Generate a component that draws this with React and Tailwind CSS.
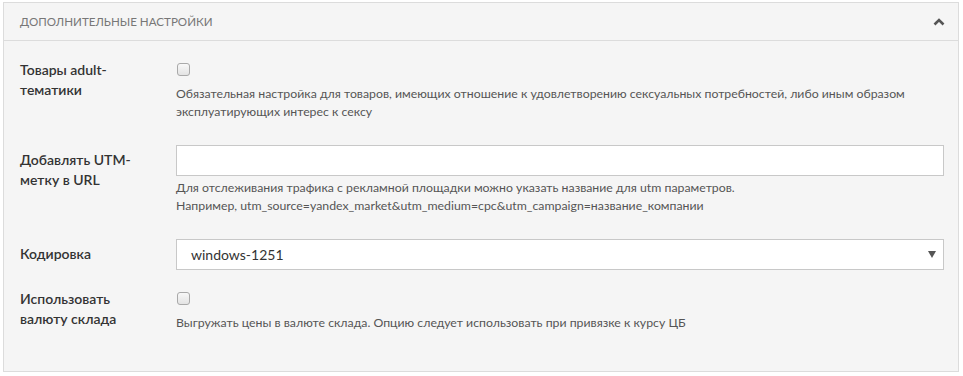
const font = { fontFamily: 'Lato, "Open Sans", sans-serif' };

function Checkbox() {
  return <span className="block w-[13px] h-[13px] rounded-[3px] border border-[#a9a9a9] bg-gradient-to-b from-[#f8f8f8] to-[#e3e3e3]" />;
}

function Label({ children, top = 'pt-0' }) {
  return (
    <div className={`w-[156px] shrink-0 pr-4 text-[14px] leading-[19.5px] font-semibold text-[#333] ${top}`}>{children}</div>
  );
}

function Help({ children, className = '' }) {
  return <p className={`text-[12.3px] leading-[18px] text-[#555] ${className}`}>{children}</p>;
}

export default function App() {
  return (
    <div className="w-[963px] h-[376px] bg-white pt-[2px] pl-[3px]" style={font}>
      <div className="w-[956px] h-[370px] border border-[#dcdcdc] bg-[#f5f5f5]">
        <div className="h-[38px] flex items-center justify-between pl-4 pr-[13px] border-b border-[#dcdcdc]">
          <span className="text-[11.6px] uppercase text-[#777]">Дополнительные настройки</span>
          <svg width="12" height="8" viewBox="0 0 12 8" className="text-[#555]">
            <path d="M1.5 6.5 L6 2 L10.5 6.5" fill="none" stroke="currentColor" strokeWidth="2.6" />
          </svg>
        </div>
        <div className="pl-4 pr-[14px] pt-[19px]">
          <div className="flex">
            <Label>Товары adult-тематики</Label>
            <div className="flex-1">
              <div className="pt-[3px] pl-[1px]"><Checkbox /></div>
              <Help className="mt-[9px]">
                Обязательная настройка для товаров, имеющих отношение к удовлетворению сексуальных потребностей, либо иным образом эксплуатирующих интерес к сексу
              </Help>
            </div>
          </div>
          <div className="flex mt-[24px]">
            <Label top="pt-[5px]">Добавлять UTM-метку в URL</Label>
            <div className="flex-1">
              <input className="block w-full h-[31px] border border-[#c8c8c8] bg-white outline-none px-3" />
              <Help className="mt-[3px]">
                Для отслеживания трафика с рекламной площадки можно указать название для utm параметров.
                <br />
                Например, utm_source=yandex_market&amp;utm_medium=cpc&amp;utm_campaign=название_компании
              </Help>
            </div>
          </div>
          <div className="flex mt-[24px]">
            <Label top="pt-[5px]">Кодировка</Label>
            <div className="flex-1">
              <div className="h-[31px] border border-[#c8c8c8] bg-white flex items-center justify-between pl-[14px] pr-[7px]">
                <span className="text-[14px] text-[#333]">windows-1251</span>
                <svg width="8" height="7" viewBox="0 0 8 7" className="text-[#555]">
                  <path d="M0 0 H8 L4 7 Z" fill="currentColor" />
                </svg>
              </div>
            </div>
          </div>
          <div className="flex mt-[19px]">
            <Label>Использовать валюту склада</Label>
            <div className="flex-1">
              <div className="pt-[3px] pl-[1px]"><Checkbox /></div>
              <Help className="mt-[9px]">
                Выгружать цены в валюте склада. Опцию следует использовать при привязке к курсу ЦБ
              </Help>
            </div>
          </div>
        </div>
      </div>
    </div>
  );
}
